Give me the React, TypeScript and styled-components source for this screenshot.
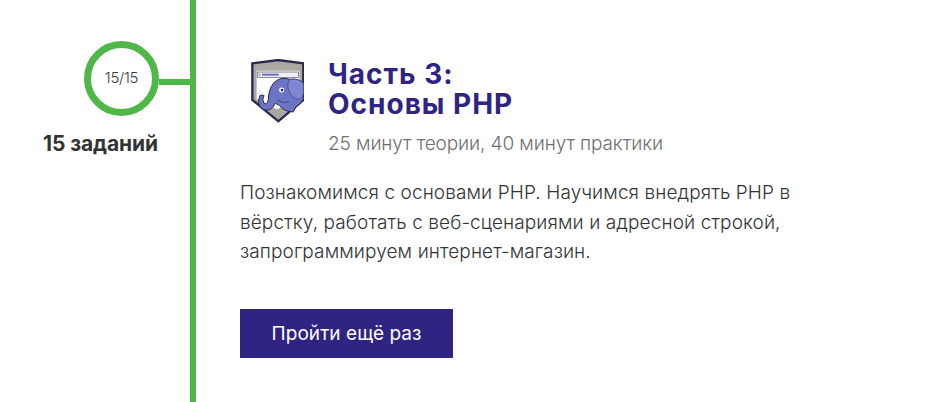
import React from "react";
import styled, { createGlobalStyle } from "styled-components";

const Global = createGlobalStyle`
  html, body { margin: 0; padding: 0; background: #fff; }
  body { font-family: "Inter", "Noto Sans", sans-serif; overflow: hidden; }
`;

const Page = styled.div`
  display: flex;
  width: 931px;
  height: 402px;
  overflow: hidden;
`;

const Side = styled.aside`
  width: 190px;
  flex: none;
  padding-top: 41px;
  box-sizing: border-box;
  display: flex;
  flex-direction: column;
  align-items: flex-end;
`;

const ProgressRow = styled.div`
  display: flex;
  align-items: center;
  width: 106px;
`;

const Ring = styled.div`
  width: 75px;
  height: 75px;
  flex: none;
  box-sizing: border-box;
  border: 7px solid #4fb648;
  border-radius: 50%;
  display: flex;
  align-items: center;
  justify-content: center;
  font-size: 15px;
  letter-spacing: -0.3px;
  font-weight: 300;
  color: #3a3a3a;
  padding-bottom: 2px;
`;

const Connector = styled.div`
  flex: 1;
  height: 6px;
  background: #4fb648;
  margin-top: 6px;
`;

const TaskCount = styled.div`
  align-self: flex-start;
  margin: 16px 0 0 43px;
  font-size: 21px;
  line-height: 24px;
  font-weight: 700;
  color: #333;
  white-space: nowrap;
  letter-spacing: -0.1px;
`;

const Line = styled.div`
  width: 6px;
  flex: none;
  background: #4fb648;
`;

const Content = styled.main`
  padding: 58px 0 0 44px;
  flex: 1;
`;

const Header = styled.header`
  display: flex;
  gap: 24px;
`;

const Badge = styled.svg`
  width: 53px;
  height: 65px;
  flex: none;
  margin: 1px 0 0 11px;
`;

const TitleBlock = styled.div`
  padding-top: 1px;
`;

const Title = styled.h2`
  margin: 0;
  font-size: 28px;
  line-height: 30px;
  font-weight: 700;
  color: #2f2483;
  letter-spacing: 1px;
`;

const Meta = styled.p`
  margin: 13px 0 0;
  font-size: 19px;
  line-height: 24px;
  font-weight: 300;
  color: #6f6f6f;
  letter-spacing: -0.1px;
`;

const Description = styled.p`
  margin: 22px 0 0;
  width: 640px;
  font-size: 19px;
  line-height: 29.6px;
  font-weight: 300;
  color: #333;
  letter-spacing: 0.1px;
`;

const Action = styled.button`
  display: block;
  margin-top: 42px;
  width: 213px;
  height: 49px;
  border: 0;
  background: #2f2483;
  color: #fff;
  font-family: inherit;
  font-size: 19px;
  font-weight: 400;
  letter-spacing: 0.05px;
`;

export default function App() {
  return (
    <Page>
      <Global />
      <Side>
        <ProgressRow>
          <Ring>15/15</Ring>
          <Connector />
        </ProgressRow>
        <TaskCount>15 заданий</TaskCount>
      </Side>
      <Line />
      <Content>
        <Header>
          <Badge viewBox="0 0 53 65">
            <g transform="translate(-11 -9) scale(0.3333)">
              <path d="M37 40 L115 30 L190 40 V150 L115 214 L37 150Z" fill="#aca6a0" stroke="#2a2850" strokeWidth="7" strokeLinejoin="miter" />
              <path d="M50 62 H178 V150 L110 178 L50 148Z" fill="#fff" />
              <rect x="52" y="66" width="124" height="16" fill="#eeeef2" stroke="#55556e" strokeWidth="2" />
              <rect x="66" y="71" width="50" height="6" fill="#6a6eb8" />
              <rect x="56" y="71" width="5" height="6" fill="#9a9aae" />
              <path d="M62 122 L54 134 M68 126 L60 138" stroke="#b9b9c0" strokeWidth="2" />
              <path d="M60 136 Q48 165 70 178 Q92 188 106 160 L118 166 Q130 184 160 186 L168 170 Q186 160 191 145 L191 100 Q175 84 150 88 Q120 78 100 100 Q85 120 85 150 Q80 166 72 160 Q65 150 72 136 Z" fill="#6c74c4" stroke="#2a2850" strokeWidth="3" strokeLinejoin="round" />
              <path d="M150 88 Q138 105 148 125 Q158 148 180 148 Q190 140 191 130 L191 100 Q175 84 150 88Z" fill="#7f87d4" stroke="#3b3a70" strokeWidth="2" />
              <circle cx="125" cy="120" r="7.5" fill="#fff" />
              <circle cx="126" cy="120" r="4" fill="#1e1e30" />
              <path d="M112 150 Q128 162 146 156" fill="none" stroke="#2a2850" strokeWidth="2" />
            </g>
          </Badge>
          <TitleBlock>
            <Title>
              Часть 3:
              <br />
              Основы PHP
            </Title>
            <Meta>25 минут теории, 40 минут практики</Meta>
          </TitleBlock>
        </Header>
        <Description>
          Познакомимся с основами PHP. Научимся внедрять PHP в
          <br />
          вёрстку, работать с веб-сценариями и адресной строкой,
          <br />
          запрограммируем интернет-магазин.
        </Description>
        <Action>Пройти ещё раз</Action>
      </Content>
    </Page>
  );
}
